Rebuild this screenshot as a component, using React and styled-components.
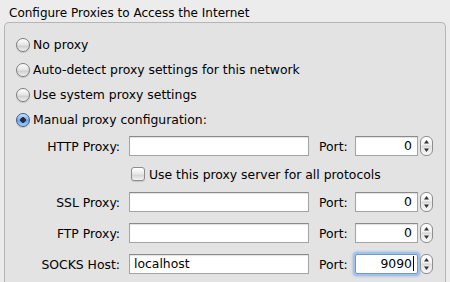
import styled, { createGlobalStyle } from "styled-components";

const GlobalStyle = createGlobalStyle`
  html, body {
    margin: 0;
    padding: 0;
    background: #ececec;
  }
  body {
    font-family: "DejaVu Sans", "Liberation Sans", sans-serif;
    font-size: 12.4px;
    color: #000;
  }
`;

const radioOptions = [
  { label: "No proxy", checked: false },
  { label: "Auto-detect proxy settings for this network", checked: false },
  { label: "Use system proxy settings", checked: false },
  { label: "Manual proxy configuration:", checked: true },
];

const proxyRows = [
  { label: "HTTP Proxy:", host: "", port: "0" },
  { checkbox: "Use this proxy server for all protocols" },
  { label: "SSL Proxy:", host: "", port: "0" },
  { label: "FTP Proxy:", host: "", port: "0" },
  { label: "SOCKS Host:", host: "localhost", port: "9090", focused: true },
];

const Stepper = () => (
  <StepperBox>
    <svg width="13" height="20" viewBox="0 0 13 20">
      <line x1="2" y1="10" x2="11" y2="10" stroke="#d0d0d0" strokeWidth="1" />
      <path d="M4 7.5 L6.5 4 L9 7.5 Z" fill="#333" />
      <path d="M4 12.5 L6.5 16 L9 12.5 Z" fill="#333" />
    </svg>
  </StepperBox>
);

const App = () => {
  return (
    <>
      <GlobalStyle />
      <Window>
        <Title>Configure Proxies to Access the Internet</Title>
        <GroupBox>
          <RadioList>
            {radioOptions.map((opt) => (
              <RadioRow key={opt.label}>
                <Radio checked={opt.checked} />
                <span>{opt.label}</span>
              </RadioRow>
            ))}
          </RadioList>

          <ProxyGrid>
            {proxyRows.map((row, i) =>
              row.checkbox ? (
                <CheckRow key={i}>
                  <Checkbox />
                  <span>{row.checkbox}</span>
                </CheckRow>
              ) : (
                <ProxyRow key={i}>
                  <FieldLabel>{row.label}</FieldLabel>
                  <TextField>{row.host}</TextField>
                  <PortLabel>Port:</PortLabel>
                  <PortField focused={row.focused}>
                    {row.port}
                    {row.focused && <Caret />}
                  </PortField>
                  <Stepper />
                </ProxyRow>
              )
            )}
          </ProxyGrid>
        </GroupBox>
      </Window>
    </>
  );
};

export default App;

const Window = styled.div`
  width: 450px;
  height: 282px;
  overflow: hidden;
  background: #ececec;
  display: flex;
  flex-direction: column;
`;

const Title = styled.div`
  padding: 5px 9px 1px;
  line-height: 16px;
  font-size: 12px;
`;

const GroupBox = styled.div`
  flex: 1;
  margin: 0 4px 0 4px;
  border: 1px solid #b5b5b5;
  border-bottom: none;
  border-radius: 5px 5px 0 0;
  background: #e3e3e3;
  padding: 9px 0 0;
`;

const RadioList = styled.div`
  display: flex;
  flex-direction: column;
  padding-left: 11px;
`;

const RadioRow = styled.div`
  display: flex;
  align-items: center;
  gap: 3px;
  height: 25px;
`;

const Radio = styled.span`
  width: 14px;
  height: 14px;
  box-sizing: border-box;
  border-radius: 50%;
  border: 1px solid ${({ checked }) => (checked ? "#3b5f92" : "#7d7d7d")};
  background: ${({ checked }) =>
    checked
      ? "radial-gradient(circle at 50% 50%, #1b2b48 0 2.5px, transparent 3px), linear-gradient(#cfe3f7, #6ea4e0 55%, #a9cdf2)"
      : "linear-gradient(#ffffff, #e4e4e4 50%, #cfcfcf 60%, #f2f2f2)"};
  box-shadow: 0 1px 1px rgba(0, 0, 0, 0.15);
  flex-shrink: 0;
`;

const ProxyGrid = styled.div`
  display: flex;
  flex-direction: column;
  gap: 11px;
  margin-top: 4px;
`;

const ProxyRow = styled.div`
  display: grid;
  grid-template-columns: 115px 180px 28px 63px 13px;
  column-gap: 9px;
  align-items: center;
  height: 20px;
  & > :nth-child(3) {
    margin-left: 1px;
  }
  & > :nth-child(5) {
    margin-left: -7px;
  }
`;

const FieldLabel = styled.span`
  text-align: right;
  white-space: nowrap;
`;

const PortLabel = styled.span`
  white-space: nowrap;
`;

const TextField = styled.div`
  height: 20px;
  box-sizing: border-box;
  background: #fff;
  border: 1px solid #a4a4a4;
  border-top-color: #8a8a8a;
  box-shadow: inset 0 1px 1px rgba(0, 0, 0, 0.12);
  padding: 0 4px;
  line-height: 18px;
  white-space: nowrap;
`;

const PortField = styled(TextField)`
  text-align: right;
  padding: 0 5px 0 4px;
  ${({ focused }) =>
    focused &&
    `
    padding-right: 3px;
    border-color: #6f98cc;
    border-radius: 2px;
    box-shadow: 0 0 0 2px #a3c2ea, 0 0 2px 3px rgba(140, 175, 225, 0.45);
  `}
`;

const Caret = styled.span`
  display: inline-block;
  width: 1px;
  height: 15px;
  background: #000;
  margin-left: 1px;
  vertical-align: -3px;
`;

const StepperBox = styled.div`
  width: 13px;
  height: 20px;
  box-sizing: border-box;
  border: 1px solid #8e8e8e;
  border-radius: 6px;
  background: linear-gradient(#ffffff, #eeeeee 50%, #e2e2e2 51%, #f8f8f8);
  overflow: hidden;
  display: flex;
  align-items: center;
  justify-content: center;
  svg {
    display: block;
    margin: -1px;
  }
`;

const CheckRow = styled.div`
  display: flex;
  align-items: center;
  gap: 4px;
  height: 14px;
  padding-left: 126px;
`;

const Checkbox = styled.span`
  width: 14px;
  height: 14px;
  box-sizing: border-box;
  border: 1px solid #8c8c8c;
  border-radius: 3px;
  background: linear-gradient(#ffffff, #e8e8e8 50%, #d6d6d6 60%, #f4f4f4);
  box-shadow: 0 1px 1px rgba(0, 0, 0, 0.12);
  flex-shrink: 0;
`;
